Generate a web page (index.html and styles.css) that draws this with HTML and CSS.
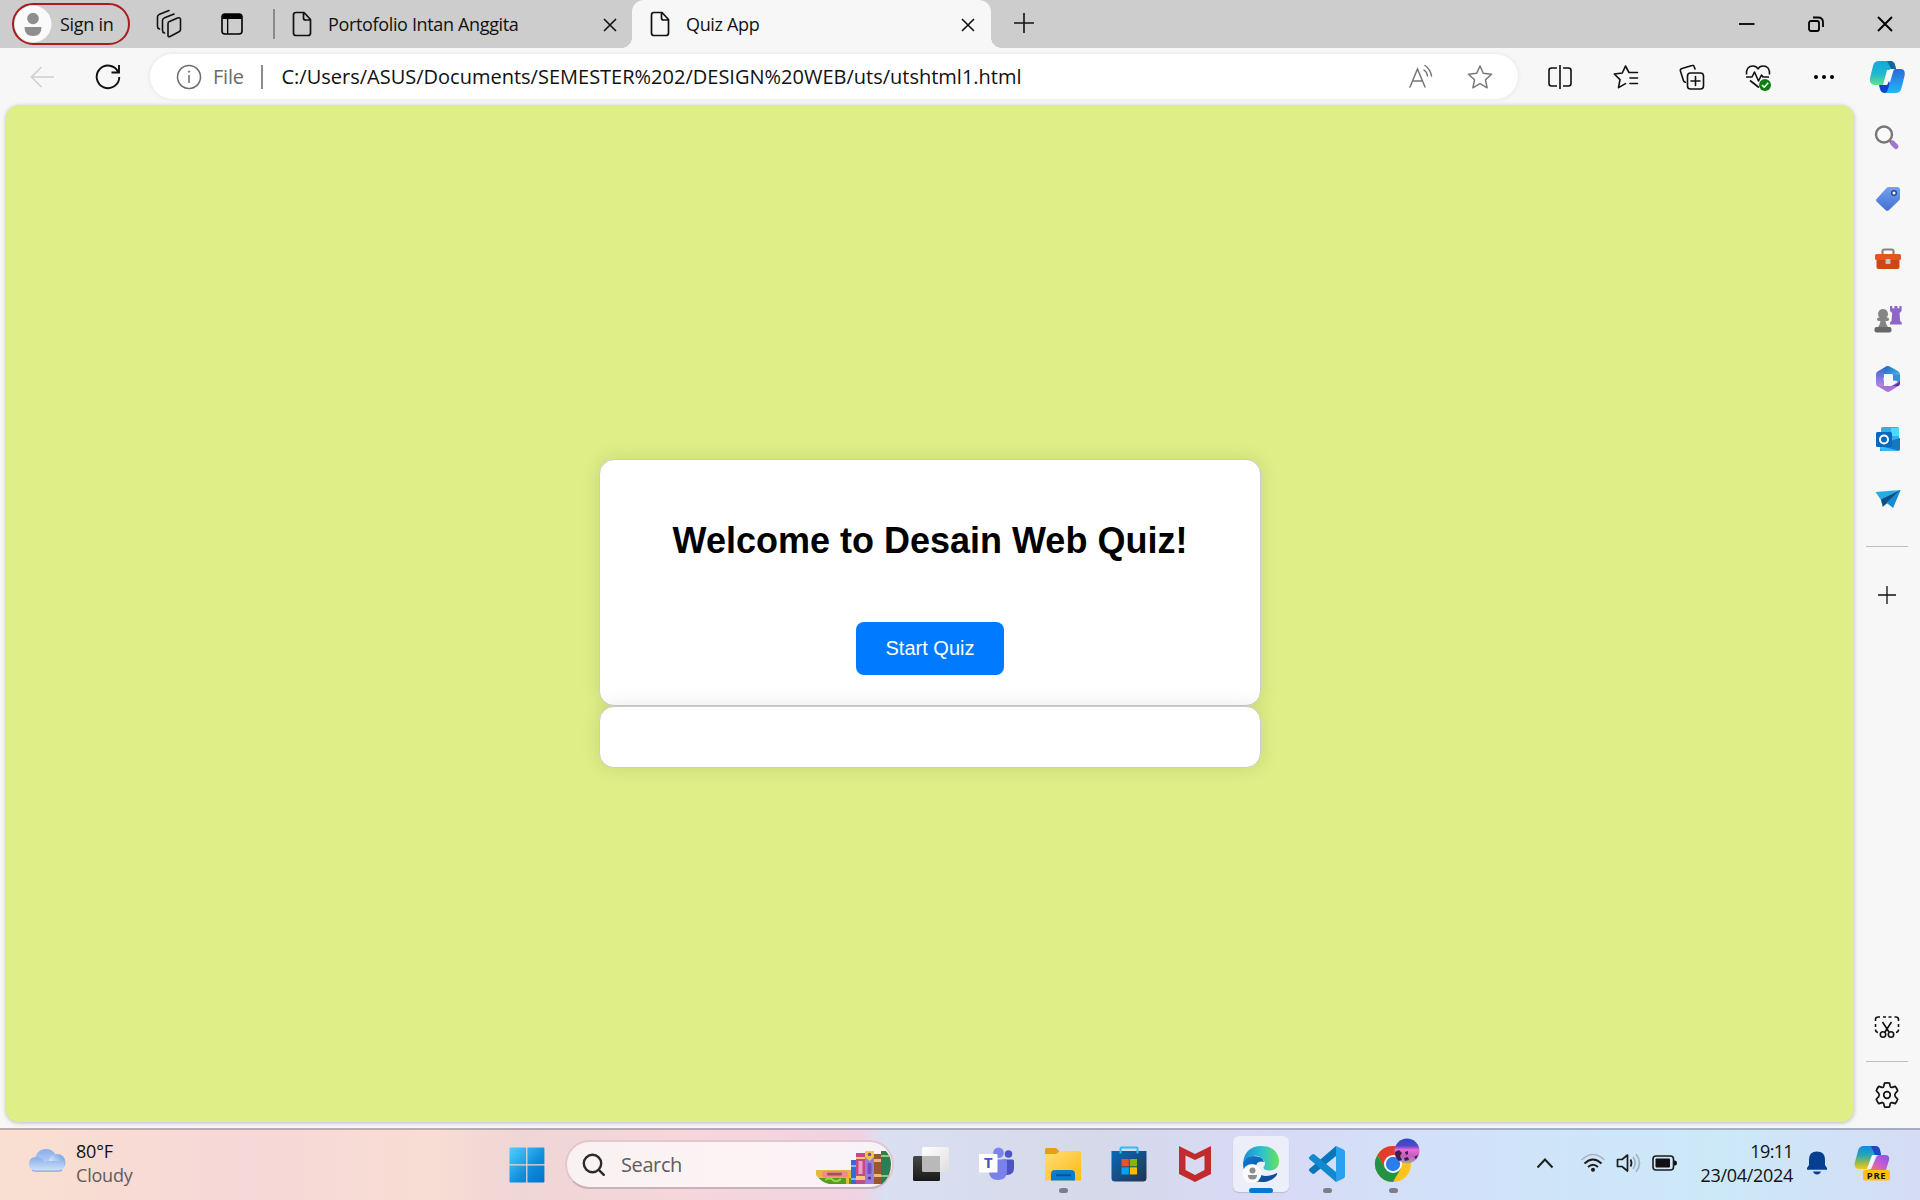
FILE: index.html
```html
<!DOCTYPE html>
<html lang="en">
<head>
<meta charset="utf-8">
<title>Quiz App</title>
<link rel="stylesheet" href="styles.css">
</head>
<body>
<header class="tabstrip">
  <div class="signin">
    <svg class="avatar" width="38" height="38" viewBox="0 0 38 38"><circle cx="19" cy="19" r="18.500" fill="#fafafa"/><circle cx="19" cy="13.500" r="5.800" fill="#8e8e8e"/><path d="M10.500 22h17q0 9-8.500 9t-8.500-9z" fill="#8e8e8e"/></svg>
    <span class="ui signin-label">Sign in</span>
  </div>
  <svg class="workspaces" width="26" height="30" viewBox="0 0 26 30" fill="none" stroke="#111" stroke-width="1.600" stroke-linejoin="round" stroke-linecap="round"><path d="M12 14.500q0-1.500 1.500-2l8-3.500q3-1 3 1.500v10q0 1.500-1.500 2.300l-8.500 4.500Q12 28.500 12 26.500z"/><path d="M8.500 24q-2-.5-2-2.500V11.500q0-1.700 1.500-2.400L18 5"/><path d="M3.500 20q-2-.5-2-2.500V8q0-1.700 1.500-2.400L13 1.500"/></svg>
  <svg class="tab-actions" width="22" height="22" viewBox="0 0 22 22"><rect x="1" y="1" width="20" height="20" rx="3" fill="none" stroke="#000" stroke-width="1.600"/><path d="M1 6V3.500Q1 1 3.500 1h15Q21 1 21 3.500V6zM6 6h1.300v15H6z"/></svg>
  <i class="strip-divider"></i>
  <div class="tab">
    <svg width="20" height="26" viewBox="0 0 20 26" fill="none" stroke="#111" stroke-width="1.700" stroke-linejoin="round"><path d="M4 1.500h8l6.500 7V22q0 2.500-2.500 2.500H4Q1.500 24.500 1.500 22V4Q1.500 1.500 4 1.500zM11.500 1.500V7q0 2 2 2h5"/></svg>
    <span class="ui tab-title">Portofolio Intan Anggita</span>
    <svg class="tab-close" width="14" height="14" viewBox="0 0 14 14"><path d="M1 1l12 12M13 1 1 13" stroke="#111" stroke-width="1.600"/></svg>
  </div>
  <div class="tab tab-active">
    <svg width="20" height="26" viewBox="0 0 20 26" fill="none" stroke="#111" stroke-width="1.700" stroke-linejoin="round"><path d="M4 1.500h8l6.500 7V22q0 2.500-2.500 2.500H4Q1.500 24.500 1.500 22V4Q1.500 1.500 4 1.500zM11.500 1.500V7q0 2 2 2h5"/></svg>
    <span class="ui tab-title">Quiz App</span>
    <svg class="tab-close" width="14" height="14" viewBox="0 0 14 14"><path d="M1 1l12 12M13 1 1 13" stroke="#111" stroke-width="1.600"/></svg>
  </div>
  <svg class="new-tab" width="22" height="22" viewBox="0 0 22 22"><path d="M11 1v20M1 11h20" stroke="#111" stroke-width="1.600"/></svg>
  <div class="window-controls">
    <svg width="16" height="16" viewBox="0 0 16 16"><path d="M0 8h15.500" stroke="#000" stroke-width="1.800"/></svg>
    <svg width="16" height="16" viewBox="0 0 16 16" fill="none" stroke="#000" stroke-width="1.800"><rect x="1" y="5" width="10" height="10" rx="2"/><path d="M5 1.500h5q5 0 5 5V11"/></svg>
    <svg width="16" height="16" viewBox="0 0 16 16"><path d="M1 1l14 14M15 1 1 15" stroke="#000" stroke-width="1.900"/></svg>
  </div>
</header>

<nav class="toolbar">
  <svg class="back" width="24" height="22" viewBox="0 0 24 22" fill="none" stroke="#cfcfcf" stroke-width="1.600"><path d="M24 11H1.500M11.500 1l-10 10 10 10"/></svg>
  <svg class="reload" width="26" height="26" viewBox="0 0 26 26" fill="none" stroke="#111" stroke-width="1.900"><path d="M23.200 8A11.300 11.300 0 1 0 24.300 13M24 1v7.500h-7.500"/></svg>
  <div class="omnibox">
    <svg width="26" height="26" viewBox="0 0 26 26" fill="none" stroke="#6b6b6b" stroke-width="1.500"><circle cx="13" cy="13" r="11.500"/><path d="M13 11v8"/><circle cx="13" cy="7.600" r=".8" fill="#6b6b6b" stroke-width=".5"/></svg>
    <span class="ui scheme">File</span>
    <i class="omni-divider"></i>
    <span class="ui url">C:/Users/ASUS/Documents/SEMESTER%202/DESIGN%20WEB/uts/utshtml1.html</span>
    <svg class="read-aloud" width="26" height="26" viewBox="0 0 26 26" fill="none" stroke="#777" stroke-width="1.500" stroke-linecap="round"><path d="M2 23 9.500 5 17 23M4.600 17h9.800M16 6q3 2 3.500 6M17 1.500q5.500 4 6.500 10.500"/></svg>
    <svg class="star" width="26" height="26" viewBox="0 0 26 26" fill="none" stroke="#777" stroke-width="1.500" stroke-linejoin="round"><path d="m13 2 3.300 7.300 8.200.9-6 5.600 1.600 8L13 19.700l-7.100 4.100 1.600-8-6-5.600 8.200-.9z"/></svg>
  </div>
  <div class="actions">
    <svg width="26" height="26" viewBox="0 0 26 26" fill="none" stroke="#111" stroke-width="1.600"><path d="M10 4H4.500Q2 4 2 6.500v13Q2 22 4.500 22H10M16 4h5.500Q24 4 24 6.500v13q0 2.500-2.500 2.500H16M13 1v24"/></svg>
    <svg width="26" height="26" viewBox="0 0 26 26" fill="none" stroke="#111" stroke-width="1.600" stroke-linejoin="round" stroke-linecap="round"><path d="M16 8.500 12.500 2 9.300 9l-8 1 5.700 5.600-1.500 8 7-4M17 8.500h7.500M17 14h7.500M17 19.500h7.500"/></svg>
    <svg width="26" height="26" viewBox="0 0 26 26" fill="none" stroke="#111" stroke-width="1.600" stroke-linecap="round" stroke-linejoin="round"><path d="m16 5-.8-2.300Q14.800 1 13 1.600L3 4.400Q1 5 1.400 7l3 9.500q.3 1.300 2 1.800"/><rect x="8.500" y="9" width="16" height="16" rx="3"/><path d="M16.500 12.500v9M12 17h9"/></svg>
    <svg width="28" height="28" viewBox="0 0 28 28" fill="none" stroke="#111" stroke-width="1.600" stroke-linejoin="round"><path d="M2.500 11.500Q2 3 9 3q3.500 0 5 3 1.500-3 5-3 7 0 6.500 8.500M2 14h6l2.500-5 4 9 3-6 1.500 2h6M6 17.500l9 7"/><circle cx="21" cy="22" r="6" fill="#107c10" stroke="none"/><path d="m18 22 2.200 2.200 4-4.500" stroke="#fff"/></svg>
    <svg width="24" height="6" viewBox="0 0 24 6"><circle cx="4" cy="3" r="2"/><circle cx="12" cy="3" r="2"/><circle cx="20" cy="3" r="2"/></svg>
    <svg class="copilot" width="36" height="34" viewBox="0 0 36 34">
      <defs>
        <linearGradient id="cpA" x1="0" y1="0" x2="0" y2="1"><stop offset="0" stop-color="#12a8e0"/><stop offset=".55" stop-color="#22b8cc"/><stop offset="1" stop-color="#62e08a"/></linearGradient>
        <linearGradient id="cpB" x1="0" y1="0" x2="0" y2="1"><stop offset="0" stop-color="#2d68d8"/><stop offset="1" stop-color="#1fb8fb"/></linearGradient>
      </defs>
      <path d="M10 1h11q4 0 5 4l1 4h-6l-5 16H6q-6 0-5-7L4 6Q5 1 10 1z" fill="url(#cpA)"/><path d="M18 1h3q4 0 5 4l1 4h-5q-2-5-4-8z" fill="#14659a"/><path d="M10 25h8l2-4 4 12h-8q-4 0-5-4z" fill="#1440cf"/><path d="M26 9h5q6 0 4.500 7l-3 12q-1 5-6 5H15q3 0 4-4l5-17q.7-3 2-3z" fill="url(#cpB)"/><path d="M18 10h4l-4 15h-4z" fill="#f7f7f7"/>
    </svg>
  </div>
</nav>

<div class="middle">
  <main class="viewport">
    <section class="card intro">
      <h1>Welcome to Desain Web Quiz!</h1>
      <button class="start">Start Quiz</button>
    </section>
    <section class="card"></section>
  </main>
  <aside class="sidebar">
    <div class="slot"><svg width="26" height="26" viewBox="0 0 26 26"><path d="m15 15 3.500 3.500" stroke="#777" stroke-width="2.500"/><circle cx="10" cy="9.500" r="8" fill="#f9f9f9" stroke="#777" stroke-width="2.400"/><path d="m18.500 18 3.500 3.500" stroke="#a173d3" stroke-width="5" stroke-linecap="round"/></svg></div>
    <div class="slot"><svg width="26" height="26" viewBox="0 0 26 26"><defs><linearGradient id="tag" x2="0" y2="1"><stop stop-color="#6fa3f4"/><stop offset="1" stop-color="#446fd0"/></linearGradient></defs><path d="M13.500 1H22q3 0 3 3v8.500q0 1-1 2L14 24q-1.800 1.700-3.500 0L2 16q-2-1.800 0-3.500L11.500 2q1-1 2-1z" fill="url(#tag)"/><circle cx="19" cy="7" r="2.300" fill="#fff" stroke="#28458f" stroke-width="1.500"/></svg></div>
    <div class="slot"><svg width="28" height="22" viewBox="0 0 28 22"><path d="M8.500 7V3.500q0-2 2-2h7q2 0 2 2V7" fill="none" stroke="#858585" stroke-width="2.200"/><rect x="1" y="6" width="26" height="6" rx="1.500" fill="#e2571d"/><path d="M2.500 12h23v7q0 2-2 2h-19q-2 0-2-2z" fill="#cf4513"/><rect x="11.500" y="11" width="5" height="5" rx="1" fill="#c5c5c5"/></svg></div>
    <div class="slot"><svg width="28" height="28" viewBox="0 0 28 28"><path d="M16 1h2.200v2.200h2.200V1h3v2.200h2V1h2.200v5l-2 2 .5 8 1.700 1.500v2H16v-2l1.500-1.500.7-8L16 6z" fill="#9065c8"/><g fill="#858585"><circle cx="9" cy="9" r="5"/><rect x="3" y="12.500" width="12" height="3.500" rx="1.700"/><path d="M6.500 14h5q0 6 3 8.500h-11q3-2.500 3-8.500z"/><rect x=".5" y="22" width="17" height="5.500" rx="2" fill="#686868"/></g></svg></div>
    <div class="slot"><svg width="26" height="28" viewBox="0 0 26 28"><defs><linearGradient id="mL" x1="0" y1="0" x2="0" y2="1"><stop stop-color="#3c67d3"/><stop offset=".5" stop-color="#7277d6"/><stop offset="1" stop-color="#bb86df"/></linearGradient><linearGradient id="mR" x2="1" y2="1"><stop stop-color="#1f62c6"/><stop offset="1" stop-color="#55cdf5"/></linearGradient></defs><path d="M11 1.500 2.500 6.500Q1 7.500 1 9.500v9q0 2 1.500 3L9 21V7z" fill="url(#mL)"/><path d="M2.500 21 11.500 26.500q1.500.8 3 0l9-5.500q1.500-1 1.500-3v-3l-8 6H4z" fill="#a873d8"/><path d="M9 6.500Q9 1 13 1q1.500 0 10.500 5.500Q25 7.500 25 9.500V16l-8-7H9z" fill="url(#mR)"/><path d="M25 9.500v9q-2-3-7-3V10z" fill="#3f8de0"/><path d="M16 21q6-1 9-5v2q0 2-1.500 3z" fill="#57319a"/><circle cx="13" cy="14" r="4.500" fill="#f7f7f7"/></svg></div>
    <div class="slot"><svg width="26" height="26" viewBox="0 0 26 26"><rect x="6" y="1" width="18" height="22" rx="1.500" fill="#32afe8"/><path d="M16 2h8v8h-8z" fill="#50d9ff"/><path d="m12 16 13-4v11q0 2-2 2H5v-5z" fill="#1677bd"/><path d="M5 20 25 25H7q-2 0-2-2z" fill="#39baf0"/><rect x="1" y="6" width="16" height="15" rx="1.500" fill="#0868bd"/><circle cx="9" cy="13.500" r="4" fill="none" stroke="#fff" stroke-width="2"/></svg></div>
    <div class="slot"><svg width="26" height="20" viewBox="0 0 26 20"><path d="M.5 3 25.500 1 18 18.500l-6-4L7.500 18 6 11z" fill="#2baae2"/><path d="M6 10.500 25.500 1 8 17.500z" fill="#124d83"/><path d="m12 13 13.500-12L18 19z" fill="#168bd0"/></svg></div>
    <i class="side-divider"></i>
    <svg class="side-plus" width="20" height="20" viewBox="0 0 20 20"><path d="M10 1v18M1 10h18" stroke="#111" stroke-width="1.300"/></svg>
    <svg class="snip" width="26" height="24" viewBox="0 0 26 24" fill="none" stroke="#111" stroke-width="1.600"><path d="M1.500 6V4.500Q1.500 2 4 2h2M9 2h3M14.500 2h3M20.500 2H22q2.500 0 2.500 2.500V6M1.500 9v3M24.500 9v3M1.500 14.500Q1.500 17 4 17.500M24.500 14.500q0 2.500-2.500 3M8.500 7l6.500 10M17.500 7 11 17"/><circle cx="9" cy="19.500" r="2.700"/><circle cx="17" cy="19.500" r="2.700"/></svg>
    <i class="side-divider"></i>
    <svg class="gear" width="28" height="28" viewBox="0 0 28 28" fill="none" stroke="#111" stroke-width="1.700" stroke-linejoin="round"><path d="M11.500 2.200q2.500-.6 5 0l.8 3.200q.4 1.300 1.700 1l3.200-1q1.700 1.900 2.500 4.300l-2.400 2.700q-1 1.600 0 3.200l2.400 2.700q-.8 2.400-2.500 4.300l-3.200-1q-1.300-.3-1.700 1l-.8 3.200q-2.500.6-5 0l-.8-3.200q-.4-1.300-1.700-1l-3.200 1q-1.700-1.900-2.500-4.300l2.400-2.700q1-1.600 0-3.200L3.300 9.700q.8-2.400 2.500-4.300l3.200 1q1.300.3 1.700-1z"/><circle cx="14" cy="14" r="3.300"/></svg>
  </aside>
</div>

<footer class="taskbar">
  <div class="weather">
    <svg width="38" height="24" viewBox="0 0 38 24"><defs><linearGradient id="cl" x2="0" y2="1"><stop stop-color="#87adec"/><stop offset="1" stop-color="#d2e2f8"/></linearGradient><linearGradient id="cl2" x1="1" y1="0" x2="0" y2="1"><stop stop-color="#6293e0"/><stop offset=".7" stop-color="#dce9fb"/></linearGradient></defs><circle cx="18" cy="12" r="11" fill="url(#cl)"/><circle cx="29" cy="14.500" r="8.500" fill="url(#cl2)"/><path d="M8 9q7 0 9 6l2-2h17q1 10-6 10H8q-7 0-7-7t7-7z" fill="url(#cl)"/><path d="M4 22.200q2 .9 4 .9h22q2 0 4-1" fill="none" stroke="#7ea7ea" stroke-width="1.200"/></svg>
    <div class="two-lines"><span class="ui temp">80°F</span><span class="ui sky">Cloudy</span></div>
  </div>
  <div class="pinned">
    <svg class="start-logo" width="36" height="36" viewBox="0 0 36 36"><defs><linearGradient id="win" x2="1" y2="1"><stop stop-color="#4fd0ff"/><stop offset=".6" stop-color="#0e8cdc"/><stop offset="1" stop-color="#0670cc"/></linearGradient></defs><path d="M1.500.5h15.700v16.700H.5V1.500q0-1 1-1zM18.400.5h16q1 0 1 1v15.700h-17zM.5 18.500h16.700v17H1.500q-1 0-1-1zM18.400 18.500h17v16q0 1-1 1h-16z" fill="url(#win)"/></svg>
    <div class="search">
      <svg width="24" height="24" viewBox="0 0 24 24" fill="none" stroke="#2b2b2b" stroke-width="2.400" stroke-linecap="round"><circle cx="10.500" cy="10.500" r="8.700"/><path d="m16.800 16.800 5 5"/></svg>
      <span class="ui search-label">Search</span>
      <svg class="books" width="76" height="34" viewBox="0 0 76 34"><defs><clipPath id="bk"><path d="M0 0h69q6 6 6 14 0 13-9 20H13Q5 32 0 25z"/></clipPath></defs><g clip-path="url(#bk)"><path d="M0 20h35v8H0z" fill="#e9b544"/><rect x="6" y="21" width="26" height="6.500" rx="3" fill="#f28b87"/><rect x="11" y="22.800" width="15" height="2.600" rx="1" fill="#995951"/><path d="M3 28h32v6H3z" fill="#559b20"/><path d="M9 30q5-3 8 0t8-1" stroke="#9fd34b" stroke-width="2" fill="none"/><path d="M30 28h3v6h-3z" fill="#e9bd36"/><path d="M35 10h5v24h-5z" fill="#2f6ddd"/><path d="M35 15h5v2h-5zM35 28h5v2h-5z" fill="#83b6ff"/><path d="M40 3h9v31h-9z" fill="#c44b88"/><path d="M40 7h9v2h-9zM40 26h9v4h-9z" fill="#f4c77d"/><rect x="42.500" y="11" width="4" height="13" fill="#ef9fc2"/><path d="M49 1h9v33h-9z" fill="#9a7bdc"/><path d="M49 1h9v6l-4.500 4-4.500-4z" fill="#f3c447"/><circle cx="53.500" cy="4.500" r="1.700" fill="#6b4da5"/><rect x="51.500" y="13" width="4" height="11" rx="1" fill="#7450b8"/><circle cx="53.500" cy="28" r="1.600" fill="#4c3290"/><path d="M58 4h7v30h-7z" fill="#9b5732"/><path d="M58 9h7v3h-7zM58 24h7v3h-7z" fill="#f0b878"/><path d="M65 1h10v33H65z" fill="#2c7c54"/><path d="M65 5h10v2H65zM65 25h10v2H65z" fill="#9cc474"/></g></svg>
    </div>
    <div class="app"><svg width="38" height="36" viewBox="0 0 38 36"><defs><linearGradient id="tv" x2="0" y2="1"><stop stop-color="#484848"/><stop offset="1" stop-color="#181818"/></linearGradient><linearGradient id="tw" x2="1" y2="1"><stop stop-color="#fff"/><stop offset="1" stop-color="#dedede"/></linearGradient></defs><rect x="10" y="1" width="27" height="25" rx="1.500" fill="url(#tw)"/><rect x="1" y="10" width="27" height="25" rx="1.500" fill="url(#tv)"/><path d="M10 10h18v16H11.500q-1.500 0-1.500-1.500z" fill="#b9b9b9"/></svg></div>
    <div class="app"><svg width="38" height="36" viewBox="0 0 38 36"><circle cx="30.500" cy="8" r="3.800" fill="#4f57c7"/><path d="M24 13.500h10.500q1.500 0 1.500 1.500v7q0 7-7 7h-5z" fill="#4c53c5"/><circle cx="20.500" cy="6.800" r="5.300" fill="#7c83ee"/><path d="M11 13.500h16q2 0 2 2V25q0 9-9 9t-9-9z" fill="#7a81ea"/><rect x="1" y="8" width="18.500" height="18.500" rx="1" fill="#fff"/><text x="10.300" y="22.300" class="teams-letter">T</text></svg></div>
    <div class="app running"><svg width="38" height="36" viewBox="0 0 38 36"><defs><linearGradient id="fo" x2="1" y2="1"><stop stop-color="#ffde76"/><stop offset="1" stop-color="#ffba17"/></linearGradient></defs><path d="M1 3.500Q1 2 2.500 2H12l4 4v4H1z" fill="#e3a112"/><path d="M1 8h11l4-3h19.500Q37 5 37 6.500v28H1z" fill="url(#fo)"/><path d="M7 34.500V28q0-4 4-4h16q4 0 4 4v6.500z" fill="#0a7bd1"/><path d="M12 29.200h15" stroke="#055597" stroke-width="2"/></svg></div>
    <div class="app"><svg width="36" height="36" viewBox="0 0 36 36"><defs><linearGradient id="st" x2="1" y2="1"><stop stop-color="#0769b9"/><stop offset="1" stop-color="#253352"/></linearGradient></defs><path d="M.5 5h35v27q0 3.500-3.500 3.500H4Q.5 35.500.5 32z" fill="url(#st)"/><path d="M9.500 7.500v-5q0-1 1-1h15q1 0 1 1v5" fill="none" stroke="#31bdf0" stroke-width="2"/><path d="M10.500 13h7.300v7.300h-7.300z" fill="#f25022"/><path d="M18.800 13H26v7.300h-7.200z" fill="#7fba00"/><path d="M10.500 21.300h7.300v7.200h-7.300z" fill="#00a4ef"/><path d="M18.800 21.300H26v7.200h-7.200z" fill="#ffb900"/></svg></div>
    <div class="app"><svg width="34" height="38" viewBox="0 0 34 38"><path d="m1 1 16 8 16-8v28L17 37 1 29zm6.500 9.500V25l9.500 5 9.500-5V10.500L17 15z" fill="#c02b2c" fill-rule="evenodd"/></svg></div>
    <div class="app focused"><svg width="38" height="38" viewBox="0 0 38 38"><defs><linearGradient id="eg" x2="1"><stop stop-color="#1791d1"/><stop offset=".5" stop-color="#2bbfd2"/><stop offset="1" stop-color="#68e35b"/></linearGradient><linearGradient id="eb" x2="1" y2="1"><stop stop-color="#1279cf"/><stop offset="1" stop-color="#0b448a"/></linearGradient></defs><path d="M1 18Q3 1 19.500 1 35 1 37 15q.5 10-9 10.500-7 0-6.500-3.500 3-3 0-7-4-5-11-4Q4 12 1 18z" fill="url(#eg)"/><path d="M1 18q3-7 10-7 10 0 11 6-8-2-8 6 0 7 9 9 7 0 12-4-4 8-14 9Q1 37 1 18z" fill="url(#eb)"/><path d="M14 23q1 7 9 8 7 0 12-3 .8 2-3 5-8 6-15 3-6-4-3-13z" fill="#104f9d"/><circle cx="10" cy="28.500" r="9.500" fill="#fafafa"/><circle cx="10.500" cy="25.500" r="3" fill="#8e8e8e"/><path d="M6 30h9q0 4.500-4.500 4.500T6 30z" fill="#8e8e8e"/></svg></div>
    <div class="app running"><svg width="38" height="38" viewBox="0 0 38 38"><path d="M28 1v10L6.500 28.500Q5 29.500 3.500 28L1.300 26q-1-1 0-2z" fill="#0876bb"/><path d="M28 37V27L6.500 9.500Q5 8.500 3.500 10l-2.200 2q-1 1 0 2z" fill="#1189cf"/><path d="m28 1 7.500 3.500Q37 5.200 37 7v24q0 1.800-1.500 2.500L28 37z" fill="#29a1ef"/></svg></div>
    <div class="app running"><svg class="chrome" width="46" height="46" viewBox="0 0 46 46"><circle cx="19" cy="27" r="18" fill="#ffc31c"/><path d="M3.400 18A18 18 0 0 1 34.600 18H19L11.200 31.500z" fill="#e33b2e"/><path d="M3.400 18A18 18 0 0 0 19 45l7.800-13.500H11.200z" fill="#229247"/><circle cx="19" cy="27" r="9" fill="#fff"/><circle cx="19" cy="27" r="7.200" fill="#2b7cec"/><defs><linearGradient id="av" x2="0" y2="1"><stop stop-color="#234bc5"/><stop offset=".3" stop-color="#5548c7"/><stop offset=".45" stop-color="#ee6ad9"/><stop offset=".7" stop-color="#c35dba"/><stop offset="1" stop-color="#aaa6b5"/></linearGradient></defs><circle cx="33" cy="14" r="12.500" fill="url(#av)"/><path d="M21 15l4-2 3 3-2 3 2 4-3 1q-4-3-4-9zM31 15l3-1v3l-2 1zM40 20l4-2-2 4zM30 21l4-1 1 3-4 1z" fill="#3a1f50"/></svg></div>
  </div>
  <div class="tray">
    <svg class="chevron" width="18" height="12" viewBox="0 0 18 12"><path d="m1.500 10.500 7.500-8 7.500 8" fill="none" stroke="#1b1b1b" stroke-width="1.900"/></svg>
    <svg class="wifi" width="26" height="20" viewBox="0 0 26 20" fill="none" stroke="#1b1b1b" stroke-width="1.900"><path d="M1.500 7q11.500-11 23 0" stroke="#a5b3c4" stroke-width="1.500"/><path d="M4.500 10.500q8.500-8 17 0M8 14q5-4.500 10 0"/><circle cx="13" cy="16.800" r="2" fill="#1b1b1b" stroke="none"/></svg>
    <svg class="volume" width="26" height="22" viewBox="0 0 26 22" fill="none" stroke="#1b1b1b" stroke-width="1.700" stroke-linejoin="round"><path d="M1.500 7.500v7H6l5.500 4.500V3L6 7.500z"/><path d="M14.500 7.500q2 3.500 0 7"/><path d="M17 5q4.500 6 0 12M20 2q7 9 0 18" stroke="#a5b3c4"/></svg>
    <svg class="battery" width="26" height="18" viewBox="0 0 26 18"><rect x="1" y="2" width="20.500" height="14" rx="3" fill="none" stroke="#1b1b1b" stroke-width="1.600"/><rect x="3.500" y="4.500" width="14.500" height="9" rx="1" fill="#111"/><path d="M22 6.500h1q2 0 2 2.500t-2 2.500h-1z" fill="#111"/></svg>
    <div class="two-lines clock"><span class="ui time">19:11</span><span class="ui date">23/04/2024</span></div>
    <svg class="bell" width="22" height="26" viewBox="0 0 22 26" fill="#073f90"><path d="M11 1.500q8 0 8 8V15l2 3v1.700H1V18l2-3V9.500q0-8 8-8zM7 21.500h8q-1 3-4 3t-4-3z"/></svg>
    <svg class="copilot-pre" width="36" height="36" viewBox="0 0 36 36"><defs><linearGradient id="pa" x2="0" y2="1"><stop stop-color="#1689dd"/><stop offset=".4" stop-color="#27a5ba"/><stop offset=".7" stop-color="#91b94e"/><stop offset="1" stop-color="#f5c91f"/></linearGradient><linearGradient id="pb" x1="1" y1="0" x2="0" y2="1"><stop stop-color="#8155ed"/><stop offset=".5" stop-color="#c65bd0"/><stop offset="1" stop-color="#ff7660"/></linearGradient></defs><path d="M10 1h11q4 0 5 4l1 5h-6l-4 14H6q-7 0-5-7L4 6Q5 1 10 1z" fill="url(#pa)"/><path d="M17 1h4q4 0 5 4l1 5h-6z" fill="#2145ca"/><path d="M25 10h6q5 0 4 5l-3 10H14q3 0 4-3l4-9q1-3 3-3z" fill="url(#pb)"/><path d="M18 10h4l-5 14h-4z" fill="#f2f4ff"/><rect x="9" y="25" width="27" height="10.500" rx="2" fill="#fbc20c"/><text x="22.500" y="33.500" class="pre-label">PRE</text></svg>
  </div>
</footer>
</body>
</html>
```
FILE: styles.css
```css
* { box-sizing: border-box; }

body {
  margin: 0;
  width: 1920px;
  height: 1200px;
  overflow: hidden;
  display: flex;
  flex-direction: column;
  background: #f7f7f7;
  font-family: "Liberation Sans", Arial, sans-serif;
}

svg { display: block; flex: none; }
i { display: block; flex: none; }

.ui {
  font-family: "Open Sans", "Noto Sans", sans-serif;
  white-space: nowrap;
  color: #111;
}

/* Tab strip */
.tabstrip {
  height: 48px;
  flex: none;
  display: flex;
  align-items: center;
  background: #cdcdcd;
  padding-left: 12px;
}

.signin {
  width: 118px;
  height: 42px;
  flex: none;
  display: flex;
  align-items: center;
  gap: 8px;
  border: 2px solid #a91b22;
  border-radius: 21px;
}
.signin-label { font-size: 18px; letter-spacing: -0.3px; margin-top: -1px; }

.workspaces { margin-left: 26px; }
.tab-actions { margin-left: 39px; }
.strip-divider { width: 2px; height: 30px; margin-left: 30px; background: #8b8b8b; }

.tab {
  width: 357px;
  height: 48px;
  flex: none;
  display: flex;
  align-items: center;
  padding: 0 15px 0 17px;
}
.tab-active {
  position: relative;
  width: 359px;
  padding: 0 16px 0 18px;
  background: #f7f7f7;
  border-radius: 12px 12px 0 0;
}
.tab-active::before,
.tab-active::after {
  content: "";
  position: absolute;
  bottom: 0;
  width: 10px;
  height: 10px;
}
.tab-active::before { left: -10px; background: radial-gradient(circle at 0 0, transparent 9.5px, #f7f7f7 10px); }
.tab-active::after { right: -10px; background: radial-gradient(circle at 100% 0, transparent 9.5px, #f7f7f7 10px); }
.tab-title { font-size: 18px; margin: -1px 0 0 16px; letter-spacing: -0.35px; }
.tab-close { margin: 1px 0 0 auto; }
.new-tab { margin: -2px 0 0 22px; }
.window-controls { display: flex; gap: 53px; margin: -1px 27px 0 auto; }

/* Toolbar */
.toolbar {
  height: 57px;
  flex: none;
  display: flex;
  align-items: center;
  padding-left: 30px;
}
.reload { margin-left: 41px; }
.omnibox {
  width: 1368px;
  height: 45px;
  margin-left: 29px;
  flex: none;
  display: flex;
  align-items: center;
  padding: 0 25px 0 26px;
  border-radius: 23px;
  background: #fff;
  box-shadow: 0 0 5px rgba(0, 0, 0, .09);
}
.scheme { font-size: 20px; margin: -1px 0 0 11px; width: 48px; color: #6b6b6b; letter-spacing: -0.2px; }
.omni-divider { width: 1.5px; height: 24px; background: #8b8b8b; margin-right: 19px; }
.url { font-size: 20px; letter-spacing: 0; margin-top: -1px; }
.read-aloud { margin-left: auto; }
.star { margin-left: 33px; }
.actions { display: flex; align-items: center; margin-left: 9px; }
.actions svg { margin: 0 20px; }
.actions svg:nth-child(4) { margin: 0 19px; }
.actions svg:nth-child(5) { margin: 0 21px; }
.actions .copilot { margin: 0 0 0 12px; }

/* Page and sidebar */
.middle { height: 1023px; flex: none; display: flex; padding-left: 6px; }
.viewport {
  width: 1848px;
  height: 1017px;
  flex: none;
  display: flex;
  flex-direction: column;
  align-items: center;
  padding-top: 354px;
  border-radius: 13px;
  background: #dfee86;
  box-shadow: 0 1px 4px rgba(0, 0, 0, .25);
}
.card {
  width: 662px;
  padding: 30px;
  border: 1px solid #ccc;
  border-radius: 15px;
  background: #fff;
  box-shadow: 0 0 20px rgba(0, 0, 0, .1);
}
.intro { height: 247px; text-align: center; }
.intro h1 { margin: 30px 0 60px; font-size: 36px; line-height: 42px; font-weight: 700; color: #000; }
.start {
  width: 148px;
  height: 53px;
  border: 0;
  border-radius: 8px;
  background: #007bff;
  color: #fff;
  font: 20px "Liberation Sans", Arial, sans-serif;
}

.sidebar {
  flex: 1;
  display: flex;
  flex-direction: column;
  align-items: center;
  padding: 4px 0 0;
}
.slot { height: 60px; flex: none; display: flex; align-items: center; padding-left: 2px; }
.slot:first-child { padding: 0 0 2px; }
.side-divider { width: 42px; height: 1px; background: #bdbdbd; }
.slot + .side-divider { margin-top: 17px; }
.side-plus { margin: 38px 1px 0 0; }
.snip { margin: auto 0 22px; }
.gear { margin: 19px 0 19px; }

/* Taskbar */
.taskbar {
  height: 72px;
  flex: none;
  display: flex;
  align-items: flex-start;
  border-top: 2px solid rgba(95, 95, 110, .38);
  background: linear-gradient(90deg, #f9dfd0 0, #f6d8d8 250px, #f8ddd3 430px, #efd6d6 520px, #f5d6dc 700px, #efd3e3 860px, #dadff1 884px, #d5d9ea 1100px, #d8daf5 1260px, #d0e3fa 1500px, #cce9f8 1720px, #d5dcf4 1920px);
}
.weather { display: flex; width: 493px; padding: 18px 0 0 28px; gap: 10px; }
.two-lines { display: flex; flex-direction: column; font-size: 18px; line-height: 24px; margin-top: -9px; }
.sky { color: #625b58; }
.temp, .sky { letter-spacing: -0.2px; }

.pinned { display: flex; align-items: center; height: 70px; margin-left: 16px; }
.start-logo { margin-top: -1px; }
.search {
  width: 329px;
  height: 49px;
  margin: -1px 4px 0 20px;
  display: flex;
  align-items: center;
  padding-left: 15px;
  border: 2px solid #e2c8ce;
  border-bottom-color: #c9b1b8;
  border-radius: 25px;
  background: linear-gradient(90deg, #faf2f2, #fdf3f5 60%, #f7f2fa);
}
.search-label { font-size: 20px; margin-left: 15px; color: #605b5b; letter-spacing: -0.4px; }
.books { margin: 5px 0 0 auto; }
.app { position: relative; width: 66px; height: 70px; display: flex; align-items: center; justify-content: center; padding-bottom: 2px; }
.app svg { position: relative; }
.running::after,
.focused::after {
  content: "";
  position: absolute;
  left: 28.5px;
  top: 58px;
  width: 9px;
  height: 5px;
  border-radius: 3px;
  background: #7d7e88;
}
.focused::before {
  content: "";
  position: absolute;
  left: 5px;
  top: 6px;
  width: 56px;
  height: 56px;
  border-radius: 6px;
  background: #eceefa;
  box-shadow: 0 1px 1px rgba(60, 60, 100, .2);
}
.focused::after { left: 21px; width: 24px; background: #0878d2; }
.chrome { margin: -8px 0 0 8px; }
.teams-letter { font: 700 15px "Open Sans", sans-serif; fill: #4b53bc; text-anchor: middle; }
.pre-label { font: 700 9.5px "Open Sans", sans-serif; fill: #111; text-anchor: middle; letter-spacing: .6px; }

.tray { flex: 1; display: flex; align-items: center; height: 70px; padding: 0 30px 4px 110px; }
.wifi { margin-left: 26px; }
.volume { margin-left: 10px; }
.battery { margin-left: 10px; }
.clock { margin: 2px 0 0 auto; text-align: right; }
.clock { margin-top: -7px; position: relative; top: 3px; }
.time { letter-spacing: -0.65px; }
.date { letter-spacing: -0.3px; }
.bell { margin-left: 13px; }
.copilot-pre { margin-left: 26px; }
```
